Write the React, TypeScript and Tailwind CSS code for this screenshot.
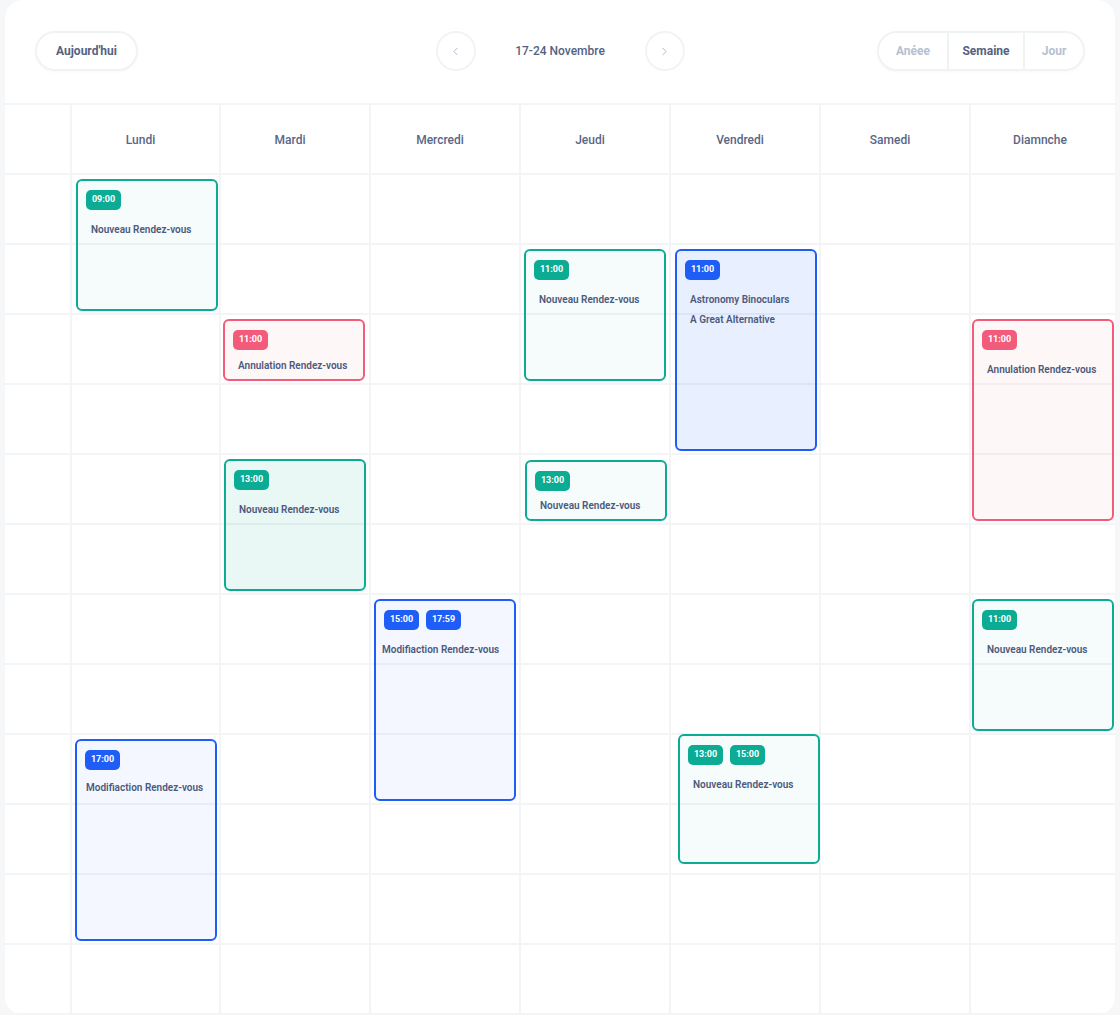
import { ChevronLeft, ChevronRight } from "lucide-react";

type Tone = "green" | "greenStrong" | "blue" | "blueStrong" | "red";

interface CalEvent {
  day: number;
  row: number;
  span: number;
  tone: Tone;
  times: string[];
  lines: string[];
  left?: number;
  dy?: number;
  dh?: number;
  indent?: number;
  titleTop?: number;
}

const DAYS = ["Lundi", "Mardi", "Mercredi", "Jeudi", "Vendredi", "Samedi", "Diamnche"];
const ROWS = 12;
const ROW_H = 70;

const EVENTS: CalEvent[] = [
  { day: 0, row: 0, span: 2, tone: "green", times: ["09:00"], lines: ["Nouveau Rendez-vous"], left: 4 },
  { day: 1, row: 2, span: 1, tone: "red", times: ["11:00"], lines: ["Annulation Rendez-vous"], left: 2, titleTop: 35 },
  { day: 1, row: 4, span: 2, tone: "greenStrong", times: ["13:00"], lines: ["Nouveau Rendez-vous"] },
  { day: 2, row: 6, span: 3, tone: "blue", times: ["15:00", "17:59"], lines: ["Modifiaction Rendez-vous"], indent: 6 },
  { day: 3, row: 1, span: 2, tone: "green", times: ["11:00"], lines: ["Nouveau Rendez-vous"] },
  { day: 3, row: 4, span: 1, tone: "green", times: ["13:00"], lines: ["Nouveau Rendez-vous"], left: 4, dy: 1, dh: -1, titleTop: 34 },
  { day: 4, row: 1, span: 3, tone: "blueStrong", times: ["11:00"], lines: ["Astronomy Binoculars", "A Great Alternative"], left: 4 },
  { day: 4, row: 8, span: 2, tone: "green", times: ["13:00", "15:00"], lines: ["Nouveau Rendez-vous"], left: 7, dy: -5, dh: -2, titleTop: 39 },
  { day: 0, row: 8, span: 3, tone: "blue", times: ["17:00"], lines: ["Modifiaction Rendez-vous"], indent: 9, titleTop: 37 },
  { day: 6, row: 2, span: 3, tone: "red", times: ["11:00"], lines: ["Annulation Rendez-vous"], left: 1 },
  { day: 6, row: 6, span: 2, tone: "green", times: ["11:00"], lines: ["Nouveau Rendez-vous"], left: 1 },
];

const toneCls: Record<Tone, { box: string; badge: string }> = {
  green: { box: "border-[#0bab94] bg-[#0bab94]/[0.04]", badge: "bg-[#0bab94]" },
  greenStrong: { box: "border-[#0bab94] bg-[#0bab94]/[0.09]", badge: "bg-[#0bab94]" },
  blue: { box: "border-[#1f5ef6] bg-[#1f5ef6]/[0.05]", badge: "bg-[#1f5ef6]" },
  blueStrong: { box: "border-[#1f5ef6] bg-[#1f5ef6]/[0.10]", badge: "bg-[#1f5ef6]" },
  red: { box: "border-[#f35b7a] bg-[#f35b7a]/[0.05]", badge: "bg-[#f35b7a]" },
};

function EventCard({ ev }: { ev: CalEvent }) {
  const t = toneCls[ev.tone];
  return (
    <div
      className={`absolute z-10 rounded-[6px] border-2 ${t.box}`}
      style={{
        left: ev.left ?? 3,
        width: 142,
        top: ev.row * ROW_H + 4 + (ev.dy ?? 0),
        height: ev.span * ROW_H - 8 + (ev.dh ?? 0),
      }}
    >
      <div className="flex gap-[7px] pl-[8px] pt-[9px]">
        {ev.times.map((tm) => (
          <span
            key={tm}
            className={`flex h-[20px] w-[35px] items-center justify-center rounded-[5px] text-[9px] font-bold text-white ${t.badge}`}
          >
            {tm}
          </span>
        ))}
      </div>
      <div
        className="absolute text-[10px] font-semibold leading-[20px] text-[#4c5a7c]"
        style={{ left: ev.indent ?? 13, top: ev.titleTop ?? 39 }}
      >
        {ev.lines.map((l) => (
          <div key={l}>{l}</div>
        ))}
      </div>
    </div>
  );
}

export default function App() {
  return (
    <div
      className="h-[1015px] overflow-hidden bg-[#f6f7f9] px-[5px]"
      style={{ fontFamily: "Roboto, 'Noto Sans', sans-serif" }}
    >
      <div className="flex h-[1015px] flex-col overflow-hidden rounded-[18px] bg-white">
        {/* Toolbar */}
        <div className="grid h-[103px] shrink-0 grid-cols-[1fr_auto_1fr] items-center px-[30px] pb-[1px]">
          <div>
            <button className="h-[40px] w-[103px] rounded-full border-2 border-[#f0f3f4] text-[12px] font-bold text-[#55617f] shadow-[0_1px_3px_rgba(0,0,0,0.03)]">
              Aujourd'hui
            </button>
          </div>
          <div className="flex items-center">
            <button className="flex h-[40px] w-[40px] items-center justify-center rounded-full border-2 border-[#f1f4f5] text-[#a8b6c8]">
              <ChevronLeft className="h-[13px] w-[13px]" strokeWidth={1.75} />
            </button>
            <span className="w-[169px] text-center text-[12px] font-medium text-[#56627f]">
              17-24 Novembre
            </span>
            <button className="flex h-[40px] w-[40px] items-center justify-center rounded-full border-2 border-[#f1f4f5] text-[#a8b6c8]">
              <ChevronRight className="h-[13px] w-[13px]" strokeWidth={1.75} />
            </button>
          </div>
          <div className="flex justify-end">
            <div className="flex h-[40px] overflow-hidden rounded-full border-2 border-[#f0f3f4] text-[12px] font-bold shadow-[0_1px_3px_rgba(0,0,0,0.03)]">
              <span className="flex w-[68px] items-center justify-center text-[#b5c1d2]">Anéee</span>
              <span className="flex w-[78px] items-center justify-center border-x-2 border-[#f0f3f4] text-[#55617f]">
                Semaine
              </span>
              <span className="flex w-[58px] items-center justify-center text-[#b5c1d2]">Jour</span>
            </div>
          </div>
        </div>

        {/* Calendar grid */}
        <div className="grid flex-1 grid-cols-[67px_149px_150px_150px_150px_150px_150px_1fr] border-t-2 border-[#f2f4f6]">
          {/* header row */}
          <div className="h-[70px] border-b-2 border-r-2 border-[#f2f4f6]" />
          {DAYS.map((d, i) => (
            <div
              key={d}
              className={`flex h-[70px] items-center justify-center border-b-2 border-[#f2f4f6] pt-[2px] text-[12px] font-medium text-[#5a6686] ${
                i < 6 ? "border-r-2 pr-[10px]" : "pr-[6px]"
              }`}
            >
              {d}
            </div>
          ))}

          {/* time column */}
          <div className="flex flex-col border-r-2 border-[#f2f4f6]">
            {Array.from({ length: ROWS }).map((_, r) => (
              <div key={r} className="h-[70px] shrink-0 border-b-2 border-[#f2f4f6]" />
            ))}
          </div>

          {/* day columns */}
          {DAYS.map((d, i) => (
            <div
              key={d}
              className={`relative flex flex-col border-[#f2f4f6] ${i < 6 ? "border-r-2" : ""}`}
            >
              {Array.from({ length: ROWS }).map((_, r) => (
                <div key={r} className="h-[70px] shrink-0 border-b-2 border-[#f2f4f6]" />
              ))}
              {EVENTS.filter((e) => e.day === i).map((e, k) => (
                <EventCard key={k} ev={e} />
              ))}
            </div>
          ))}
        </div>
      </div>
    </div>
  );
}
